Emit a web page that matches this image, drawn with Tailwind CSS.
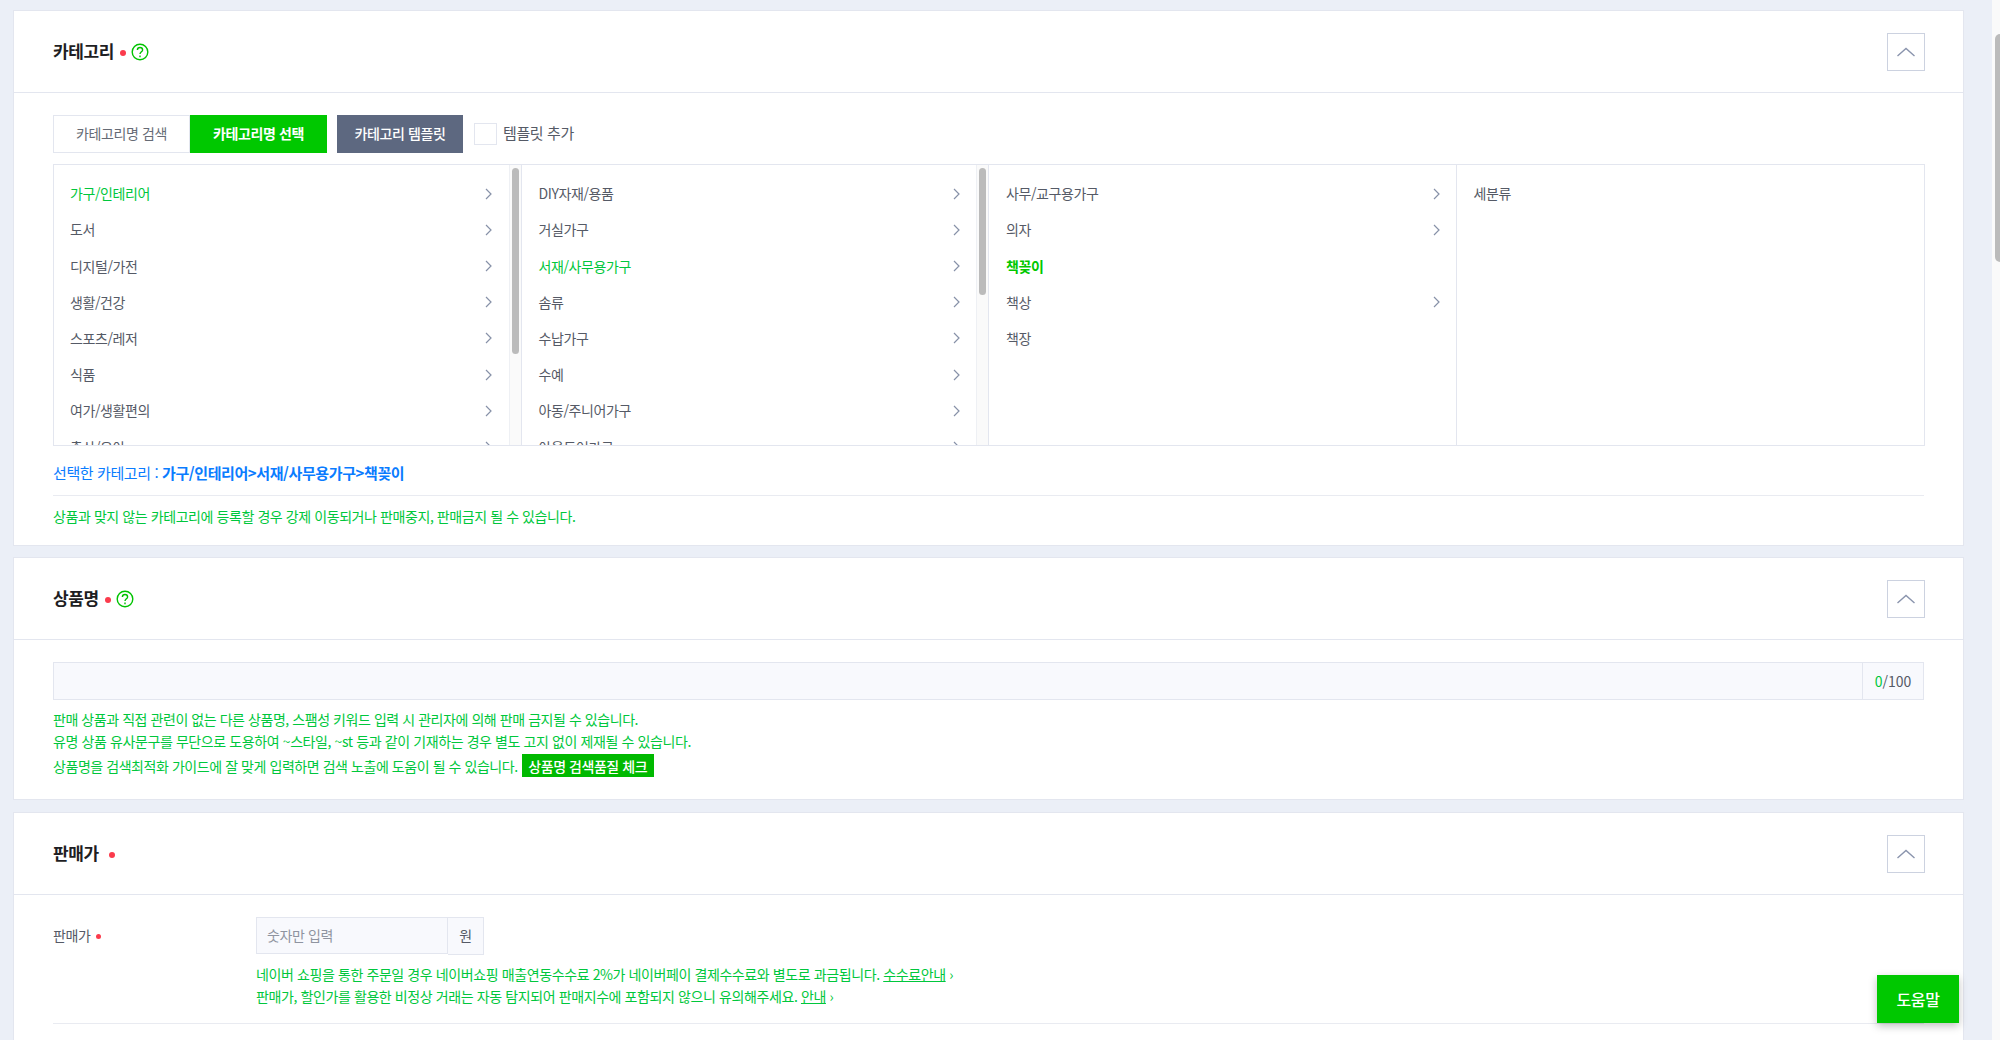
<!DOCTYPE html>
<html lang="ko">
<head>
  <meta charset="UTF-8">
  <meta name="viewport" content="width=device-width, initial-scale=1.0">
  <script src="https://cdn.jsdelivr.net/npm/@tailwindcss/browser@4"></script>
  <title>상품 등록</title>
</head>
<body class="bg-[#ebeff7] font-['Noto_Sans_CJK_KR','Noto_Sans',sans-serif] text-[14px] text-[#555a66] tracking-[-0.4px]">
  <div class="relative flex h-[1040px] w-[2000px] overflow-hidden">
    <main class="w-[1992px] pl-[13px] pt-[10px]">

      <!-- category -->
      <section class="h-[536px] w-[1951px] border border-[#e3e6ef] bg-white">
        <header class="flex h-[82px] items-center justify-between border-b border-[#e3e6ef] pl-[39px] pr-[38px]">
          <div class="flex items-center">
            <h2 class="mb-[2px] text-[17px] font-bold text-[#1e1e23]">카테고리</h2>
            <span class="ml-[6px] mt-[3px] h-[6px] w-[6px] rounded-full bg-[#fb3b4c]"></span>
            <svg class="ml-[5px]" width="18" height="18" viewBox="0 0 18 18" fill="none" stroke="#00c300" stroke-width="1.4"><circle cx="9" cy="9" r="7.800"/><path d="M6.400 7.100c0-1.500 1.100-2.600 2.600-2.600s2.600 1 2.600 2.400c0 1.900-2.600 2-2.600 4.200"/><path d="M9 12.600v1.600"/></svg>
          </div>
          <button class="flex h-[38px] w-[38px] items-center justify-center border border-[#ccd2e0]">
            <svg width="20" height="12" viewBox="0 0 20 12" fill="none" stroke="#8a94ad" stroke-width="1.4"><path d="M1.500 10 10 2.500 18.500 10"/></svg>
          </button>
        </header>
        <div class="px-[39px] pt-[22px]">
          <div class="flex h-[39px] items-start">
            <button class="h-[38px] w-[137px] border border-[#e3e6ef] pb-[1px] text-[#666b75]">카테고리명 검색</button>
            <button class="h-[38px] w-[137px] bg-[#00c800] pb-[1px] font-bold text-white">카테고리명 선택</button>
            <button class="ml-[10px] h-[38px] w-[126px] bg-[#5d6880] pb-[1px] font-medium text-white">카테고리 템플릿</button>
            <span class="ml-[11px] mt-[8px] h-[22px] w-[23px] border border-[#e3e6ef] bg-white"></span>
            <label class="ml-[6px] mt-[7px] text-[15px] text-[#555a66]">템플릿 추가</label>
          </div>

          <div class="mt-[10px] grid h-[282px] w-[1872px] grid-cols-4 overflow-hidden border border-[#e3e6ef]">
            <div class="flex overflow-hidden border-r border-[#e3e6ef]">
              <ul class="flex-1 pt-[10.600px]">
                <li class="flex h-[36.200px] items-center justify-between pl-[16px] pr-[17px] text-[#00c73c]">가구/인테리어<svg width="7" height="12" viewBox="0 0 7 12" fill="none" stroke="#8791a8" stroke-width="1.200"><path d="M1 1l5 5-5 5"/></svg></li>
                <li class="flex h-[36.200px] items-center justify-between pl-[16px] pr-[17px]">도서<svg width="7" height="12" viewBox="0 0 7 12" fill="none" stroke="#8791a8" stroke-width="1.200"><path d="M1 1l5 5-5 5"/></svg></li>
                <li class="flex h-[36.200px] items-center justify-between pl-[16px] pr-[17px]">디지털/가전<svg width="7" height="12" viewBox="0 0 7 12" fill="none" stroke="#8791a8" stroke-width="1.200"><path d="M1 1l5 5-5 5"/></svg></li>
                <li class="flex h-[36.200px] items-center justify-between pl-[16px] pr-[17px]">생활/건강<svg width="7" height="12" viewBox="0 0 7 12" fill="none" stroke="#8791a8" stroke-width="1.200"><path d="M1 1l5 5-5 5"/></svg></li>
                <li class="flex h-[36.200px] items-center justify-between pl-[16px] pr-[17px]">스포츠/레저<svg width="7" height="12" viewBox="0 0 7 12" fill="none" stroke="#8791a8" stroke-width="1.200"><path d="M1 1l5 5-5 5"/></svg></li>
                <li class="flex h-[36.200px] items-center justify-between pl-[16px] pr-[17px]">식품<svg width="7" height="12" viewBox="0 0 7 12" fill="none" stroke="#8791a8" stroke-width="1.200"><path d="M1 1l5 5-5 5"/></svg></li>
                <li class="flex h-[36.200px] items-center justify-between pl-[16px] pr-[17px]">여가/생활편의<svg width="7" height="12" viewBox="0 0 7 12" fill="none" stroke="#8791a8" stroke-width="1.200"><path d="M1 1l5 5-5 5"/></svg></li>
                <li class="flex h-[36.200px] items-center justify-between pl-[16px] pr-[17px]">출산/육아<svg width="7" height="12" viewBox="0 0 7 12" fill="none" stroke="#8791a8" stroke-width="1.200"><path d="M1 1l5 5-5 5"/></svg></li>
              </ul>
              <div class="h-full w-[12px] shrink-0 border-l border-[#eef0f4] bg-[#fafafa] pl-[2px] pt-[3px]"><div class="h-[186px] w-[7px] rounded-full bg-[#bbbbbb]"></div></div>
            </div>
            <div class="flex overflow-hidden border-r border-[#e3e6ef]">
              <ul class="flex-1 pt-[10.600px]">
                <li class="flex h-[36.200px] items-center justify-between pl-[17px] pr-[16px]">DIY자재/용품<svg width="7" height="12" viewBox="0 0 7 12" fill="none" stroke="#8791a8" stroke-width="1.200"><path d="M1 1l5 5-5 5"/></svg></li>
                <li class="flex h-[36.200px] items-center justify-between pl-[17px] pr-[16px]">거실가구<svg width="7" height="12" viewBox="0 0 7 12" fill="none" stroke="#8791a8" stroke-width="1.200"><path d="M1 1l5 5-5 5"/></svg></li>
                <li class="flex h-[36.200px] items-center justify-between pl-[17px] pr-[16px] text-[#00c73c]">서재/사무용가구<svg width="7" height="12" viewBox="0 0 7 12" fill="none" stroke="#8791a8" stroke-width="1.200"><path d="M1 1l5 5-5 5"/></svg></li>
                <li class="flex h-[36.200px] items-center justify-between pl-[17px] pr-[16px]">솜류<svg width="7" height="12" viewBox="0 0 7 12" fill="none" stroke="#8791a8" stroke-width="1.200"><path d="M1 1l5 5-5 5"/></svg></li>
                <li class="flex h-[36.200px] items-center justify-between pl-[17px] pr-[16px]">수납가구<svg width="7" height="12" viewBox="0 0 7 12" fill="none" stroke="#8791a8" stroke-width="1.200"><path d="M1 1l5 5-5 5"/></svg></li>
                <li class="flex h-[36.200px] items-center justify-between pl-[17px] pr-[16px]">수예<svg width="7" height="12" viewBox="0 0 7 12" fill="none" stroke="#8791a8" stroke-width="1.200"><path d="M1 1l5 5-5 5"/></svg></li>
                <li class="flex h-[36.200px] items-center justify-between pl-[17px] pr-[16px]">아동/주니어가구<svg width="7" height="12" viewBox="0 0 7 12" fill="none" stroke="#8791a8" stroke-width="1.200"><path d="M1 1l5 5-5 5"/></svg></li>
                <li class="flex h-[36.200px] items-center justify-between pl-[17px] pr-[16px]">아웃도어가구<svg width="7" height="12" viewBox="0 0 7 12" fill="none" stroke="#8791a8" stroke-width="1.200"><path d="M1 1l5 5-5 5"/></svg></li>
              </ul>
              <div class="h-full w-[12px] shrink-0 border-l border-[#eef0f4] bg-[#fafafa] pl-[2px] pt-[3px]"><div class="h-[127px] w-[7px] rounded-full bg-[#bbbbbb]"></div></div>
            </div>
            <ul class="border-r border-[#e3e6ef] pt-[10.600px]">
              <li class="flex h-[36.200px] items-center justify-between pl-[17px] pr-[16px]">사무/교구용가구<svg width="7" height="12" viewBox="0 0 7 12" fill="none" stroke="#8791a8" stroke-width="1.200"><path d="M1 1l5 5-5 5"/></svg></li>
              <li class="flex h-[36.200px] items-center justify-between pl-[17px] pr-[16px]">의자<svg width="7" height="12" viewBox="0 0 7 12" fill="none" stroke="#8791a8" stroke-width="1.200"><path d="M1 1l5 5-5 5"/></svg></li>
              <li class="flex h-[36.200px] items-center pl-[17px] font-bold text-[#00c800]">책꽂이</li>
              <li class="flex h-[36.200px] items-center justify-between pl-[17px] pr-[16px]">책상<svg width="7" height="12" viewBox="0 0 7 12" fill="none" stroke="#8791a8" stroke-width="1.200"><path d="M1 1l5 5-5 5"/></svg></li>
              <li class="flex h-[36.200px] items-center pl-[17px]">책장</li>
            </ul>
            <ul class="pt-[10.600px]">
              <li class="flex h-[36.200px] items-center pl-[17px]">세분류</li>
            </ul>
          </div>

          <p class="mt-[15px] text-[15px] leading-[24px] text-[#0a7cff]">선택한 카테고리 : <strong class="font-bold">가구/인테리어&gt;서재/사무용가구&gt;책꽂이</strong></p>
          <p class="mt-[10px] border-t border-[#e9ebf1] pt-[10px] leading-[20px] tracking-[-0.42px] text-[#00c73c]">상품과 맞지 않는 카테고리에 등록할 경우 강제 이동되거나 판매중지, 판매금지 될 수 있습니다.</p>
        </div>
      </section>

      <!-- product name -->
      <section class="mt-[11px] h-[243px] w-[1951px] border border-[#e3e6ef] bg-white">
        <header class="flex h-[82px] items-center justify-between border-b border-[#e3e6ef] pl-[39px] pr-[38px]">
          <div class="flex items-center">
            <h2 class="mb-[2px] text-[17px] font-bold text-[#1e1e23]">상품명</h2>
            <span class="ml-[6px] mt-[3px] h-[6px] w-[6px] rounded-full bg-[#fb3b4c]"></span>
            <svg class="ml-[5px]" width="18" height="18" viewBox="0 0 18 18" fill="none" stroke="#00c300" stroke-width="1.4"><circle cx="9" cy="9" r="7.800"/><path d="M6.400 7.100c0-1.500 1.100-2.600 2.600-2.600s2.600 1 2.600 2.400c0 1.900-2.600 2-2.600 4.200"/><path d="M9 12.600v1.600"/></svg>
          </div>
          <button class="flex h-[38px] w-[38px] items-center justify-center border border-[#ccd2e0]">
            <svg width="20" height="12" viewBox="0 0 20 12" fill="none" stroke="#8a94ad" stroke-width="1.4"><path d="M1.500 10 10 2.500 18.500 10"/></svg>
          </button>
        </header>
        <div class="px-[39px] pt-[22px]">
          <div class="flex h-[38px]">
            <div class="flex-1 border border-[#e3e6ef] bg-[#f8f9fd]"></div>
            <div class="flex w-[61px] items-center justify-center border border-l-0 border-[#e3e6ef] bg-[#f8f9fd] text-[14px] tracking-normal text-[#555a66]"><span class="text-[#00c73c]">0</span>/100</div>
          </div>
          <div class="mt-[8px] leading-[22px] text-[#00c73c]">
            <p class="tracking-[-0.44px]">판매 상품과 직접 관련이 없는 다른 상품명, 스팸성 키워드 입력 시 관리자에 의해 판매 금지될 수 있습니다.</p>
            <p>유명 상품 유사문구를 무단으로 도용하여 ~스타일, ~st 등과 같이 기재하는 경우 별도 고지 없이 제재될 수 있습니다.</p>
            <p class="mt-[2px] flex items-center tracking-[-0.44px]">상품명을 검색최적화 가이드에 잘 맞게 입력하면 검색 노출에 도움이 될 수 있습니다.<span class="ml-[4px] flex h-[23px] w-[132px] items-center justify-center bg-[#00b900] font-medium text-white">상품명 검색품질 체크</span></p>
          </div>
        </div>
      </section>

      <!-- price -->
      <section class="mt-[12px] h-[400px] w-[1951px] border border-[#e3e6ef] bg-white">
        <header class="flex h-[82px] items-center justify-between border-b border-[#e3e6ef] pl-[39px] pr-[38px]">
          <div class="flex items-center">
            <h2 class="mb-[2px] text-[17px] font-bold text-[#1e1e23]">판매가</h2>
            <span class="ml-[10px] mt-[3px] h-[6px] w-[6px] rounded-full bg-[#fb3b4c]"></span>
          </div>
          <button class="flex h-[38px] w-[38px] items-center justify-center border border-[#ccd2e0]">
            <svg width="20" height="12" viewBox="0 0 20 12" fill="none" stroke="#8a94ad" stroke-width="1.4"><path d="M1.500 10 10 2.500 18.500 10"/></svg>
          </button>
        </header>
        <div class="mx-[39px] flex h-[129px] border-b border-[#e9ebf1] pt-[22px]">
          <div class="flex h-[36px] w-[203px] items-center text-[#555a66]">판매가<span class="ml-[6px] mt-[2px] h-[5px] w-[5px] rounded-full bg-[#fb3b4c]"></span></div>
          <div>
            <div class="flex h-[38px]">
              <div class="flex h-[37px] w-[192px] items-center border border-[#e3e6ef] bg-[#f8f9fd] pb-[1px] pl-[10px] text-[#8f94a0]">숫자만 입력</div>
              <div class="flex w-[36px] items-center justify-center border border-l-0 border-[#e3e6ef] bg-[#f8f9fd] pb-[2px] text-[#555a66]">원</div>
            </div>
            <div class="mt-[8px] leading-[22px] text-[#00c73c]">
              <p>네이버 쇼핑을 통한 주문일 경우 네이버쇼핑 매출연동수수료 2%가 네이버페이 결제수수료와 별도로 과금됩니다. <span class="underline">수수료안내</span> ›</p>
              <p>판매가, 할인가를 활용한 비정상 거래는 자동 탐지되어 판매지수에 포함되지 않으니 유의해주세요. <span class="underline">안내</span> ›</p>
            </div>
          </div>
        </div>
      </section>
    </main>

    <!-- page scrollbar -->
    <div class="h-full w-[8px] bg-[#fafafa] pl-[3px] pt-[34px]"><div class="h-[228px] w-[5px] rounded-l-full bg-[#bbbbbb]"></div></div>

    <button class="absolute left-[1877px] top-[975px] h-[48px] w-[82px] bg-[#00c800] text-[16px] font-medium text-white shadow-[0_3px_8px_rgba(0,0,0,0.25)]">도움말</button>
  </div>
</body>
</html>
